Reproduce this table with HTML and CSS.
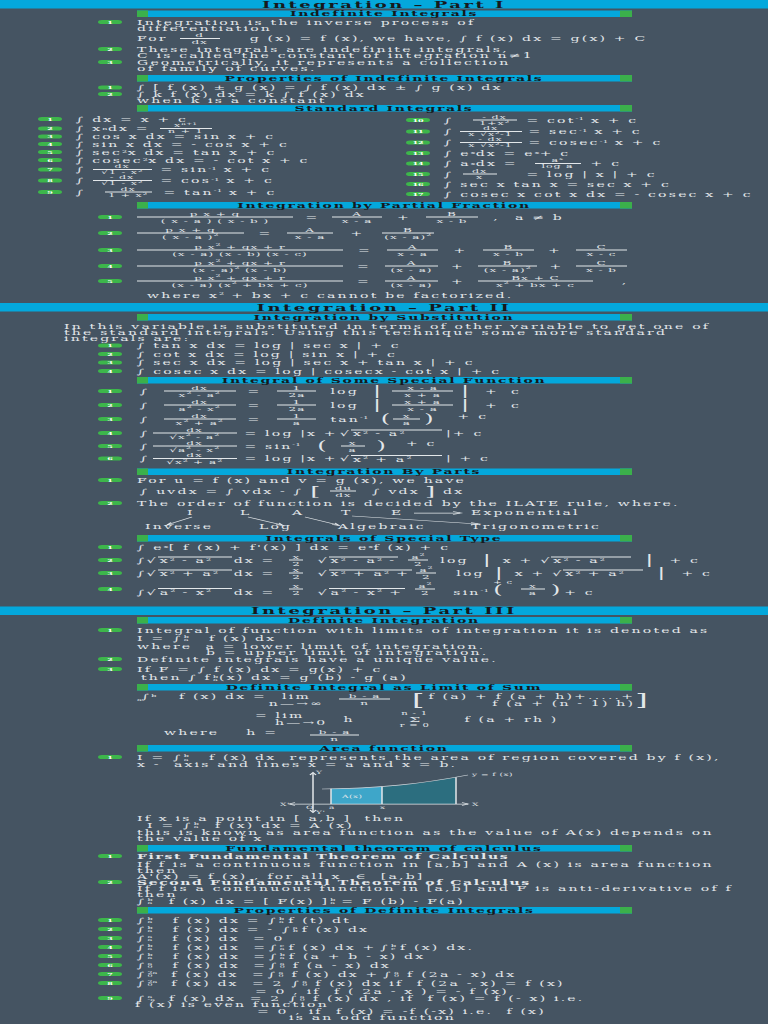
FILE: index.html
```html
<!DOCTYPE html>
<html lang="en">
<head>
<meta charset="utf-8">
<title>Integration – Formula Sheet</title>
<link rel="stylesheet" href="styles.css">
</head>
<body>
<div class="frame">
<div class="sheet">

<!-- ================= PART I ================= -->
<div class="main">Integration – Part I</div>
<div class="sub mt4">Indefinite Integrals</div>
<div class="it mt4"><span class="b">1</span><div>Integration is the inverse process of<br>differentiation</div></div>
<div class="cont h26 mt2">For<span class="fr w40 ml12"><span>d</span><span>dx</span></span><span class="ml30">g (x) = f (x), we have, ∫ f (x) dx = g(x) + C</span></div>
<div class="it mt2"><span class="b">2</span><div>These integrals are indefinite integrals,<br>C is called the constant of integration n≠1</div></div>
<div class="it mt2"><span class="b">3</span><div>Geometrically, it represents a collection<br>of family of curves.</div></div>

<div class="sub mt8">Properties of Indefinite Integrals</div>
<div class="it mt6"><span class="b">1</span><div>∫ [ f (x) ± g (x) = ∫ f (x) dx ± ∫ g (x) dx</div></div>
<div class="it mt1"><span class="b">2</span><div>∫ k f (x) dx = k ∫ f (x) dx<br>when k is a constant</div></div>

<div class="sub mt4">Standard Integrals</div>
<div class="std mt5">
  <div class="col">
    <div class="sr h20"><span class="b">1</span>∫ dx = x + c</div>
    <div class="sr h17"><span class="b">2</span>∫ x<sup>n</sup> dx =<span class="fr fs w52 ml10"><span>x<sup>n+1</sup></span><span>n + 1</span></span></div>
    <div class="sr h15"><span class="b">3</span>∫ cos x dx = sin x + c</div>
    <div class="sr h16"><span class="b">4</span>∫ sin x dx = - cos x + c</div>
    <div class="sr h16"><span class="b">5</span>∫ sec<sup>2</sup>x dx = tan x + c</div>
    <div class="sr h16"><span class="b">6</span>∫ cosec<sup>2</sup>x dx = - cot x + c</div>
    <div class="sr h21"><span class="b">7</span>∫<span class="fr fs w59 ml7"><span>dx</span><span>√1 - x<sup>2</sup></span></span><span class="ml9">= sin<sup>-1</sup> x + c</span></div>
    <div class="sr h24"><span class="b">8</span>∫<span class="fr fs w59 ml7"><span>- dx</span><span>√1 - x<sup>2</sup></span></span><span class="ml9">= cos<sup>-1</sup> x + c</span></div>
    <div class="sr h22"><span class="b">9</span>∫<span class="fr fs w47 ml19"><span>dx</span><span>1 + x<sup>2</sup></span></span><span class="ml12">= tan<sup>-1</sup> x + c</span></div>
  </div>
  <div class="col">
    <div class="sr h24"><span class="b">10</span>∫<span class="fr fs w44 ml19"><span>- dx</span><span>1+x<sup>2</sup></span></span><span class="ml10">= cot<sup>-1</sup> x + c</span></div>
    <div class="sr h22"><span class="b">11</span>∫<span class="fr fs w62 ml6"><span>dx</span><span>x √x<sup>2</sup>-1</span></span><span class="ml7">= sec<sup>-1</sup> x + c</span></div>
    <div class="sr h21"><span class="b">12</span>∫<span class="fr fs w62 ml6"><span>- dx</span><span>x √x<sup>2</sup>-1</span></span><span class="ml7">= cosec<sup>-1</sup> x + c</span></div>
    <div class="sr h21"><span class="b">13</span>∫ e<sup>x</sup> dx = e<sup>x</sup> + c</div>
    <div class="sr h21"><span class="b">14</span>∫ a<sup>x</sup> dx =<span class="fr fs w46 ml17"><span>a<sup>x</sup></span><span>log a</span></span><span class="ml10">+ c</span></div>
    <div class="sr h21"><span class="b">15</span>∫<span class="fr fs w34 ml9"><span>dx</span><span>x</span></span><span class="ml30">= log | x | + c</span></div>
    <div class="sr h20"><span class="b">16</span>∫ sec x tan x = sec x + c</div>
    <div class="sr h20"><span class="b">17</span>∫ cosec x cot x dx = - cosec x + c</div>
  </div>
</div>

<div class="sub mt6">Integration by Partial Fraction</div>
<div class="it mid h28 mt3"><span class="b">1</span>
  <div class="pf pf1">
    <span class="fr"><span>p x + q</span><span>( x - a ) ( x - b )</span></span>
    <span>=</span>
    <span class="fr"><span>A</span><span>x - a</span></span>
    <span>+</span>
    <span class="fr"><span>B</span><span>x - b</span></span>
    <span>,</span>
    <span class="js">a ≠ b</span>
  </div>
</div>
<div class="it mid h28 mt4"><span class="b">2</span>
  <div class="pf pf2">
    <span class="fr"><span>p x + q</span><span>( x - a )<sup>2</sup></span></span>
    <span>=</span>
    <span class="fr"><span>A</span><span>x - a</span></span>
    <span>+</span>
    <span class="fr"><span>B</span><span>(x - a)<sup>2</sup></span></span>
  </div>
</div>
<div class="it mid h28 mt6"><span class="b">3</span>
  <div class="pf pf3">
    <span class="fr"><span>p x<sup>2</sup> + qx + r</span><span>(x - a) (x - b) (x - c)</span></span>
    <span>=</span>
    <span class="fr"><span>A</span><span>x - a</span></span>
    <span>+</span>
    <span class="fr"><span>B</span><span>x - b</span></span>
    <span>+</span>
    <span class="fr"><span>C</span><span>x - c</span></span>
  </div>
</div>
<div class="it mid h28 mt4"><span class="b">4</span>
  <div class="pf pf4">
    <span class="fr"><span>p x<sup>2</sup> + qx + r</span><span>(x - a)<sup>2</sup> (x - b)</span></span>
    <span>=</span>
    <span class="fr"><span>A</span><span>(x - a)</span></span>
    <span>+</span>
    <span class="fr"><span>B</span><span>(x - a)<sup>2</sup></span></span>
    <span>+</span>
    <span class="fr"><span>C</span><span>x - b</span></span>
  </div>
</div>
<div class="it mid h28 mt2"><span class="b">5</span>
  <div class="pf pf5">
    <span class="fr"><span>p x<sup>2</sup> + qx + r</span><span>(x - a) (x<sup>2</sup> + bx + c)</span></span>
    <span>=</span>
    <span class="fr"><span>A</span><span>(x - a)</span></span>
    <span>+</span>
    <span class="fr"><span>Bx + C</span><span>x<sup>2</sup> + bx + c</span></span>
    <span>,</span>
  </div>
</div>
<div class="cont h12 mt8"><span class="ml10">where x<sup>2</sup> + bx + c cannot be factorized.</span></div>

<!-- ================= PART II ================= -->
<div class="main mt10">Integration – Part II</div>
<div class="sub mt5">Integration by Substitution</div>
<div class="para mt5">In this variable is substituted in terms of other variable to get one of<br>the standard integrals. Using this technique some more standard<br>integrals are:</div>
<div class="it mid h17"><span class="b">1</span>∫ tan x dx = log | sec x | + c</div>
<div class="it mid h17"><span class="b">2</span>∫ cot x dx = log | sin x | + c</div>
<div class="it mid h17"><span class="b">3</span>∫ sec x dx = log | sec x + tan x | + c</div>
<div class="it mid h17"><span class="b">4</span>∫ cosec x dx = log | cosecx - cot x | + c</div>

<div class="sub mt4">Integral of Some Special Function</div>
<div class="it mid h28 mt1"><span class="b">1</span>
  <span class="ml3">∫</span>
  <span class="fr w72 ml14"><span>dx</span><span>x<sup>2</sup> - a<sup>2</sup></span></span>
  <span class="ml12">=</span>
  <span class="fr w39 ml16"><span>1</span><span>2a</span></span>
  <span class="ml14">log</span>
  <span class="big ml14">|</span>
  <span class="fr w61 ml11"><span>x - a</span><span>x + a</span></span>
  <span class="big ml8">|</span>
  <span class="ml16">+</span>
  <span class="ml12">c</span>
</div>
<div class="it mid h28"><span class="b">2</span>
  <span class="ml3">∫</span>
  <span class="fr w72 ml14"><span>dx</span><span>a<sup>2</sup> - x<sup>2</sup></span></span>
  <span class="ml12">=</span>
  <span class="fr w39 ml16"><span>1</span><span>2a</span></span>
  <span class="ml14">log</span>
  <span class="big ml14">|</span>
  <span class="fr w61 ml11"><span>x + a</span><span>x - a</span></span>
  <span class="big ml8">|</span>
  <span class="ml16">+</span>
  <span class="ml12">c</span>
</div>
<div class="it mid h28"><span class="b">3</span>
  <span class="ml3">∫</span>
  <span class="fr w72 ml14"><span>dx</span><span>x<sup>2</sup> + a<sup>2</sup></span></span>
  <span class="ml12">=</span>
  <span class="fr w39 ml16"><span>1</span><span>a</span></span>
  <span class="ml14">tan<sup>-1</sup></span>
  <span class="bigp ml12">(</span>
  <span class="fr w27 ml3"><span>x</span><span>a</span></span>
  <span class="bigp ml4">)</span>
  <span class="raise ml24">+ c</span>
</div>
<div class="it mid h27"><span class="b">4</span>
  <span class="ml3">∫</span>
  <span class="fr w84 ml3"><span>dx</span><span>√x<sup>2</sup> - a<sup>2</sup></span></span>
  <span class="ml8">= log |x +</span>
  <span class="ml2">√</span><span class="ov w91">x<sup>2</sup> - a<sup>2</sup></span>
  <span class="ml4">|+ c</span>
</div>
<div class="it mid h25"><span class="b">5</span>
  <span class="ml3">∫</span>
  <span class="fr w84 ml3"><span>dx</span><span>√a<sup>2</sup> - x<sup>2</sup></span></span>
  <span class="ml8">= sin<sup>-1</sup></span>
  <span class="bigp ml16">(</span>
  <span class="fr w24 ml14"><span>x</span><span>a</span></span>
  <span class="bigp ml12">)</span>
  <span class="raise ml20">+ c</span>
</div>
<div class="it mid h25"><span class="b">6</span>
  <span class="ml3">∫</span>
  <span class="fr w84 ml3"><span>dx</span><span>√x<sup>2</sup> + a<sup>2</sup></span></span>
  <span class="ml8">= log |x +</span>
  <span class="ml2">√</span><span class="ov w91">x<sup>2</sup> + a<sup>2</sup></span>
  <span class="ml4">| + c</span>
</div>

<div class="sub mt8">Integration By Parts</div>
<div class="it mt4 h12"><span class="b">1</span><div>For u = f (x) and v = g (x), we have</div></div>
<div class="cont h24 mt4">
  <span class="ml3">∫ uvdx = ∫ vdx - ∫</span>
  <span class="bigb ml7">[</span>
  <span class="fr w26 ml10"><span>du</span><span>dx</span></span>
  <span class="ml16">∫ vdx</span>
  <span class="bigb ml5">]</span>
  <span class="ml8">dx</span>
</div>
<div class="it mt6 h12"><span class="b">2</span><div>The order of function is decided by the ILATE rule, where.</div></div>
<svg class="ilate mt2" width="768" height="50" viewBox="0 0 768 50">
  <g class="svt">
    <text x="187" y="17">I</text>
    <text x="240" y="17">L</text>
    <text x="292" y="17">A</text>
    <text x="341" y="17">T</text>
    <text x="391" y="17">E</text>
    <text x="471" y="17">Exponential</text>
    <text x="145" y="45">Inverse</text>
    <text x="259" y="45">Log</text>
    <text x="338" y="45">Algebraic</text>
    <text x="471" y="45">Trigonometric</text>
  </g>
  <g class="svl">
    <path d="M414 12 H460"/>
    <path d="M453 9 L461 12 L453 15"/>
    <path d="M192 20 L168 35"/>
    <path d="M171 31 L167 36 L174 34"/>
    <path d="M248 20 L282 36"/>
    <path d="M276 35 L283 37 L279 32"/>
    <path d="M305 20 L338 36"/>
    <path d="M332 35 L339 37 L335 32"/>
    <path d="M352 18 L478 34"/>
    <path d="M471 31 L479 34 L471 36"/>
  </g>
</svg>

<div class="sub mt6">Integrals of Special Type</div>
<div class="it mid h12 mt5"><span class="b">1</span>∫ e<sup>x</sup> [ f (x) + f'(x) ] dx = e<sup>x</sup> f (x) + c</div>
<div class="it mid h24 mt8"><span class="b">2</span>
  <span>∫√</span><span class="ov w74">x<sup>2</sup> - a<sup>2</sup></span><span class="ml2">dx =</span>
  <span class="fr w14 ml14"><span>x</span><span>2</span></span>
  <span class="ml14">√</span><span class="ov">x<sup>2</sup> - a<sup>2</sup> -</span>
  <span class="fr w20 ml10"><span>a<sup>2</sup></span><span>2</span></span>
  <span class="ml12">log</span>
  <span class="big ml14">|</span>
  <span class="ml12">x + √</span><span class="ov w80">x<sup>2</sup> - a<sup>2</sup></span>
  <span class="big ml14">|</span>
  <span class="ml16">+ c</span>
</div>
<div class="it mid h24 mt2"><span class="b">3</span>
  <span>∫√</span><span class="ov w74">x<sup>2</sup> + a<sup>2</sup></span><span class="ml2">dx =</span>
  <span class="fr w14 ml14"><span>x</span><span>2</span></span>
  <span class="ml14">√</span><span class="ov">x<sup>2</sup> + a<sup>2</sup> +</span>
  <span class="fr w20 ml4"><span>a<sup>2</sup></span><span>2</span></span>
  <span class="ml20">log</span>
  <span class="big ml10">|</span>
  <span class="ml12">x + √</span><span class="ov w80">x<sup>2</sup> + a<sup>2</sup></span>
  <span class="big ml14">|</span>
  <span class="ml16">+ c</span>
</div>
<div class="it bot h36 mt2"><span class="b">4</span>
  <span>∫√</span><span class="ov w74">a<sup>2</sup> - x<sup>2</sup></span><span class="ml2">dx =</span>
  <span class="fr w14 ml14"><span>x</span><span>2</span></span>
  <span class="ml14">√</span><span class="ov">a<sup>2</sup> - x<sup>2</sup> +</span>
  <span class="fr w20 ml10"><span>a<sup>2</sup></span><span>2</span></span>
  <span class="ml18">sin<sup>-1</sup></span>
  <span class="stkp"><span class="sm">+ c</span><span class="bigp">(</span></span>
  <span class="fr w24 ml8"><span>x</span><span>a</span></span>
  <span class="bigp ml6">)</span>
  <span class="ml4">+ c</span>
</div>

<!-- ================= PART III ================= -->
<div class="main mt17">Integration – Part III</div>
<div class="sub mt4">Definite Integration</div>
<div class="it mt7 h12"><span class="b">1</span><div>Integral of function with limits of integration it is denoted as</div></div>
<div class="cont h16 mt2">I =<span class="int ml8">∫<span class="lm"><span>b</span><span>a</span></span></span><span class="ml20">f (x) dx</span></div>
<div class="cont mt2"><div>where&nbsp; a = lower limit of integration.<br><span class="ind">b = upper limit of integration.</span></div></div>
<div class="it mt2 h12"><span class="b">2</span><div>Definite integrals have a unique value.</div></div>
<div class="it mt8 h12"><span class="b">3</span><div>If F = ∫ f (x) dx = g(x) + c</div></div>
<div class="cont h16 mt4"><span class="ml4">then ∫ f<span class="lm lmi"><span>b</span><span>a</span></span>(x) dx = g (b) - g (a)</span></div>

<div class="sub mt4">Definite Integral as Limit of Sum</div>
<div class="ls1 mt5">
  <span class="t14"><span class="lo">a</span>∫<sup>b</sup></span>
  <span class="t14 ml22">f (x) dx =</span>
  <span class="stk ml2"><span>lim</span><span>n—→∞</span></span>
  <span class="fr w51 ml15"><span>b - a</span><span>n</span></span>
  <span class="bigger ml22">[</span>
  <span class="two ml4"><span>f (a) + f (a + h)+.....+</span><span>f (a + (n - 1) h)</span></span>
  <span class="bigger">]</span>
</div>
<div class="ls2 mt4">
  <span class="stk2"><span>= lim</span><span class="pl20">h—→0</span></span>
  <span class="ml16">h</span>
  <span class="stk3 ml45"><span class="sm">n - 1</span><span class="sig">Σ</span><span class="sm">r = 0</span></span>
  <span class="ml35">f (a + rh )</span>
</div>
<div class="ls3 mt2">
  <span class="t14">where</span>
  <span class="t14 ml27">h =</span>
  <span class="fr w49 ml32"><span>b - a</span><span>n</span></span>
</div>

<div class="sub mt6">Area function</div>
<div class="it mt5"><span class="b">1</span><div>I =<span class="int ml8">∫<span class="lm"><span>b</span><span>a</span></span></span>&nbsp;&nbsp; f (x) dx&nbsp; represents the area of region covered by f (x),<br>x -&nbsp; axis and lines x = a and x = b.</div></div>
<div class="graph mt6">
  <svg width="260" height="88" viewBox="0 0 260 88">
    <defs>
      <clipPath id="under"><path d="M42 38 C 100 37, 140 28, 188 10 L188 68 L42 68 Z"/></clipPath>
    </defs>
    <g clip-path="url(#under)">
      <rect x="51" y="0" width="51" height="68" fill="#3ea6c9"/>
      <rect x="102" y="0" width="74" height="68" fill="#2c6e7f"/>
    </g>
    <path d="M42 38 C 100 37, 140 28, 188 10" fill="none" stroke="#d3d9de" stroke-width="1.5"/>
    <g class="svl">
      <line x1="51" y1="37.6" x2="51" y2="68"/>
      <line x1="102" y1="33.5" x2="102" y2="68"/>
      <line x1="176" y1="14.5" x2="176" y2="68"/>
      <line x1="10" y1="68" x2="188" y2="68"/>
      <path d="M15 65 L9 68 L15 71"/>
      <path d="M182 65 L188 68 L182 71"/>
      <line x1="33" y1="6" x2="33" y2="84"/>
      <path d="M30 10 L33 5 L36 10"/>
      <path d="M30 80 L33 85 L36 80"/>
    </g>
    <g class="gt">
      <text x="0" y="72">X'</text>
      <text x="192" y="72">X</text>
      <text x="36" y="9">Y</text>
      <text x="36" y="88">Y'</text>
      <text x="26" y="78">O</text>
      <text x="49" y="78">a</text>
      <text x="100" y="78">x</text>
      <text x="62" y="56">A(x)</text>
      <text x="192" y="12">y = f (x)</text>
    </g>
  </svg>
</div>
<div class="cont h12 mt2">If x is a point in [ a,b ]&nbsp; then</div>
<div class="cont h16"><span class="ml10">I =</span><span class="int ml8">∫<span class="lm"><span>b</span><span>a</span></span></span><span class="ml16">f (x) dx = A (x)</span></div>
<div class="cont"><div>this is known as area function as the value of A(x) depends on<br>the value of x</div></div>

<div class="sub mt8">Fundamental theorem of calculus</div>
<div class="it mt3 h12"><span class="b">1</span><div class="bold">First Fundamental Theorem of Calculus</div></div>
<div class="cont mt4"><div>If f is a continuous function in [a,b] and A (x) is area function<br>then</div></div>
<div class="cont h12">A'(x) = f (x) , for all x&nbsp; ∈&nbsp; [a,b]</div>
<div class="it h12"><span class="b">2</span><div class="bold">Second Fundamental Theorem of Calculus</div></div>
<div class="cont"><div>If f is a continuous function in [a,b] and F is anti-derivative of f<br>then</div></div>
<div class="cont h16"><span class="int">∫<span class="lm"><span>b</span><span>a</span></span></span><span class="ml16">f (x) dx = [ F(x) ]</span><span class="lm"><span>b</span><span>a</span></span><span class="ml6">= F (b) - F(a)</span></div>

<div class="sub mt4">Properties of Definite Integrals</div>
<div class="it mid h18 mt4"><span class="b">1</span><span class="int">∫<span class="lm"><span>b</span><span>a</span></span></span><span class="ml20">f (x) dx =</span><span class="int ml8">∫<span class="lm"><span>b</span><span>a</span></span></span><span class="ml4">f (t) dt</span></div>
<div class="it mid h18"><span class="b">2</span><span class="int">∫<span class="lm"><span>b</span><span>a</span></span></span><span class="ml20">f (x) dx = -</span><span class="int ml8">∫<span class="lm"><span>a</span><span>b</span></span></span><span class="ml4">f (x) dx</span></div>
<div class="it mid h18"><span class="b">3</span><span class="int">∫<span class="lm"><span>a</span><span>a</span></span></span><span class="ml20">f (x) dx&nbsp; = 0</span></div>
<div class="it mid h18"><span class="b">4</span><span class="int">∫<span class="lm"><span>b</span><span>a</span></span></span><span class="ml20">f (x) dx&nbsp; =</span><span class="int ml2">∫<span class="lm"><span>c</span><span>a</span></span></span><span class="ml4">f (x) dx +</span><span class="int ml4">∫<span class="lm"><span>b</span><span>c</span></span></span><span class="ml4">f (x) dx.</span></div>
<div class="it mid h18"><span class="b">5</span><span class="int">∫<span class="lm"><span>b</span><span>a</span></span></span><span class="ml20">f (x) dx&nbsp; =</span><span class="int ml2">∫<span class="lm"><span>b</span><span>a</span></span></span><span class="ml4">f (a + b - x) dx</span></div>
<div class="it mid h18"><span class="b">6</span><span class="int">∫<span class="lm"><span>a</span><span>0</span></span></span><span class="ml20">f (x) dx&nbsp; =</span><span class="int ml2">∫<span class="lm"><span>a</span><span>0</span></span></span><span class="ml8">f (a - x) dx</span></div>
<div class="it mid h18"><span class="b">7</span><span class="int">∫<span class="lm"><span>2a</span><span>0</span></span></span><span class="ml14">f (x) dx&nbsp; =</span><span class="int ml2">∫<span class="lm"><span>a</span><span>0</span></span></span><span class="ml8">f (x) dx +</span><span class="int ml4">∫<span class="lm"><span>a</span><span>0</span></span></span><span class="ml8">f (2a - x) dx</span></div>
<div class="it mid h18"><span class="b">8</span><span class="int">∫<span class="lm"><span>2a</span><span>0</span></span></span><span class="ml14">f (x) dx&nbsp; = 2</span><span class="int ml8">∫<span class="lm"><span>a</span><span>0</span></span></span><span class="ml8">f (x) dx if&nbsp; f (2a - x) = f (x)</span></div>
<div class="cont h14 pl255">= 0 , if&nbsp; f ( 2a - x ) = - f (x)</div>
<div class="it mid h14"><span class="b">9</span><span class="int">∫<span class="lm"><span>a</span><span>-a</span></span></span><span class="ml14">f (x) dx&nbsp; = 2</span><span class="int ml8">∫<span class="lm"><span>a</span><span>0</span></span></span><span class="ml8">f (x) dx , if&nbsp; f (x) = f (- x) i.e.</span></div>
<div class="cont h12 pl135">f (x) is even function</div>
<div class="cont h14 pl257">= 0 , if&nbsp; f (x) = -f (-x) i.e.&nbsp; f (x)</div>
<div class="cont h12 pl289">is an odd function</div>

</div>
</div>
</body>
</html>
```

FILE: styles.css
```css
* { box-sizing: border-box; }

html {
  height: 1024px;
  overflow: hidden;
  background: #455462;
}

body {
  margin: 0;
  padding: 0;
  height: 1024px;
  overflow: hidden;
  background: #455462;
}

/* fixed poster frame: the sheet inside is laid out at double height
   and squeezed vertically, giving the wide, flat lettering of the original */
.frame {
  width: 768px;
  height: 1024px;
  overflow: hidden;
}

.sheet {
  width: 768px;
  height: 2048px;
  transform: scaleY(0.5);
  transform-origin: 0 0;
  font-family: "DejaVu Serif", "Liberation Serif", serif;
  font-size: 14px;
  letter-spacing: 2.2px;
  line-height: 12px;
  color: #e3e7ea;
  white-space: nowrap;
}

/* ---------- bars ---------- */
.main {
  height: 17px;
  background: #04a8dc;
  color: #16191d;
  font-weight: bold;
  font-size: 18px;
  letter-spacing: 2.5px;
  line-height: 17px;
  text-align: center;
}

.sub {
  margin-left: 137px;
  width: 495px;
  height: 13px;
  background: #04a8dc;
  border-left: 11px solid #3bb04b;
  border-right: 12px solid #3bb04b;
  color: #16191d;
  font-weight: bold;
  font-size: 14px;
  letter-spacing: 1.7px;
  line-height: 13px;
  text-align: center;
}

/* ---------- numbered badge ---------- */
.b {
  flex: none;
  width: 24px;
  height: 8px;
  border-radius: 4px;
  background: #3db64b;
  color: #ffffff;
  font-size: 8px;
  font-weight: bold;
  line-height: 8px;
  letter-spacing: 0;
  text-align: center;
}

/* ---------- rows ---------- */
.it {
  display: flex;
  align-items: flex-start;
  padding-left: 98px;
}
.it > .b { margin-right: 15px; margin-top: 2px; }
.it.mid { align-items: center; }
.it.mid > .b { margin-top: 0; }
.it.bot { align-items: flex-end; padding-bottom: 6px; }
.it.bot > .b { margin-bottom: 8px; }

.cont {
  display: flex;
  align-items: center;
  padding-left: 137px;
}

.para { padding-left: 64px; }

.bold { font-weight: bold; letter-spacing: 1.6px; }

.ind { padding-left: 69px; }

.pl135 { padding-left: 135px; }
.pl255 { padding-left: 255px; }
.pl257 { padding-left: 257px; }
.pl289 { padding-left: 289px; }
.pl20 { padding-left: 20px; }

/* ---------- standard integrals (two columns) ---------- */
.std {
  display: grid;
  grid-template-columns: 368px 1fr;
  padding-left: 38px;
}
.col { display: flex; flex-direction: column; }
.sr { display: flex; align-items: center; }
.sr > .b { margin-right: 14px; }

/* ---------- maths pieces ---------- */
sup {
  font-size: 8px;
  line-height: 0;
  vertical-align: 5px;
  letter-spacing: 0.5px;
}

.fr {
  display: inline-flex;
  flex-direction: column;
  align-items: stretch;
  justify-content: center;
  flex: none;
  font-size: 12px;
  line-height: 10px;
  letter-spacing: 1px;
  text-align: center;
}
.fr > span:first-child {
  border-bottom: 2px solid #e3e7ea;
  padding: 0 2px 1px;
}
.fr > span:last-child { padding-top: 1px; }
.fr.fs { font-size: 11px; line-height: 8px; }
.fr.fs sup { font-size: 7px; vertical-align: 4px; }

.ov {
  display: inline-block;
  border-top: 2px solid #e3e7ea;
  padding: 1px 2px 0;
  line-height: 11px;
  text-align: left;
}

.big { font-size: 24px; line-height: 20px; letter-spacing: 0; }
.bigp { font-size: 24px; line-height: 20px; letter-spacing: 0; }
.bigb { font-size: 26px; line-height: 22px; letter-spacing: 0; }
.bigger { font-size: 32px; line-height: 30px; letter-spacing: 0; }

.raise { align-self: flex-start; margin-top: 2px; }

.int {
  display: inline-flex;
  align-items: center;
  flex: none;
}
.lm {
  display: inline-flex;
  flex-direction: column;
  font-size: 8px;
  line-height: 7px;
  letter-spacing: 0;
  margin-left: 1px;
  vertical-align: middle;
}
.lmi { margin-right: 1px; }

.lo { font-size: 8px; vertical-align: -3px; letter-spacing: 0; }
.sm { font-size: 10px; line-height: 10px; letter-spacing: 0.8px; }

.stkp {
  display: inline-flex;
  flex-direction: column;
  align-items: flex-start;
  margin-left: 4px;
}

/* partial fraction grids */
.pf {
  display: grid;
  align-items: center;
  justify-items: center;
}
.pf > .fr { justify-self: stretch; }
.pf > .js { justify-self: start; }
.pf1 { grid-template-columns: 156px 39px 50px 44px 52px 37px auto; }
.pf2 { grid-template-columns: 107px 43px 46px 49px 52px; }
.pf3 { grid-template-columns: 206px 44px 51px 45px 51px 42px 51px; }
.pf4 { grid-template-columns: 206px 42px 53px 40px 59px 39px 51px; }
.pf5 { grid-template-columns: 206px 42px 53px 40px 115px 64px; }

/* limit of sum */
.ls1 {
  display: flex;
  align-items: flex-start;
  height: 30px;
  padding-left: 137px;
}
.ls2 {
  display: flex;
  align-items: center;
  height: 36px;
  padding-left: 255px;
}
.ls3 {
  display: flex;
  align-items: flex-start;
  height: 26px;
  padding-left: 164px;
}
.t14 { line-height: 14px; }
.stk {
  display: inline-flex;
  flex-direction: column;
  align-items: center;
  line-height: 14px;
}
.stk2 {
  display: inline-flex;
  flex-direction: column;
  align-items: flex-start;
  line-height: 14px;
}
.stk3 {
  display: inline-flex;
  flex-direction: column;
  align-items: center;
}
.sig { font-size: 16px; line-height: 14px; letter-spacing: 0; }
.two {
  display: flex;
  flex-direction: column;
  align-items: flex-end;
  line-height: 14px;
}

/* diagrams */
.ilate { display: block; }
.svt text {
  fill: #e3e7ea;
  font-size: 14px;
  letter-spacing: 2.2px;
}
.svl { stroke: #e3e7ea; stroke-width: 1.5; fill: none; }
.graph { padding-left: 280px; height: 88px; }
.graph svg { display: block; }
.gt text {
  fill: #e3e7ea;
  font-size: 9px;
  letter-spacing: 0.5px;
}

/* ---------- sizes ---------- */
.h12 { height: 12px; }
.h14 { height: 14px; }
.h15 { height: 15px; }
.h16 { height: 16px; }
.h17 { height: 17px; }
.h18 { height: 18px; }
.h20 { height: 20px; }
.h21 { height: 21px; }
.h22 { height: 22px; }
.h24 { height: 24px; }
.h25 { height: 25px; }
.h26 { height: 26px; }
.h27 { height: 27px; }
.h28 { height: 28px; }
.h36 { height: 36px; }

.w14 { width: 14px; }
.w20 { width: 20px; }
.w24 { width: 24px; }
.w26 { width: 26px; }
.w27 { width: 27px; }
.w34 { width: 34px; }
.w39 { width: 39px; }
.w40 { width: 40px; }
.w44 { width: 44px; }
.w46 { width: 46px; }
.w47 { width: 47px; }
.w49 { width: 49px; }
.w51 { width: 51px; }
.w52 { width: 52px; }
.w59 { width: 59px; }
.w61 { width: 61px; }
.w62 { width: 62px; }
.w72 { width: 72px; }
.w74 { width: 74px; }
.w80 { width: 80px; }
.w84 { width: 84px; }
.w91 { width: 91px; }

.mt1 { margin-top: 1px; }
.mt2 { margin-top: 2px; }
.mt3 { margin-top: 3px; }
.mt4 { margin-top: 4px; }
.mt5 { margin-top: 5px; }
.mt6 { margin-top: 6px; }
.mt7 { margin-top: 7px; }
.mt8 { margin-top: 8px; }
.mt10 { margin-top: 10px; }
.mt17 { margin-top: 17px; }

.ml2 { margin-left: 2px; }
.ml3 { margin-left: 3px; }
.ml4 { margin-left: 4px; }
.ml5 { margin-left: 5px; }
.ml6 { margin-left: 6px; }
.ml7 { margin-left: 7px; }
.ml8 { margin-left: 8px; }
.ml9 { margin-left: 9px; }
.ml10 { margin-left: 10px; }
.ml11 { margin-left: 11px; }
.ml12 { margin-left: 12px; }
.ml14 { margin-left: 14px; }
.ml15 { margin-left: 15px; }
.ml16 { margin-left: 16px; }
.ml17 { margin-left: 17px; }
.ml18 { margin-left: 18px; }
.ml19 { margin-left: 19px; }
.ml20 { margin-left: 20px; }
.ml22 { margin-left: 22px; }
.ml24 { margin-left: 24px; }
.ml27 { margin-left: 27px; }
.ml30 { margin-left: 30px; }
.ml32 { margin-left: 32px; }
.ml35 { margin-left: 35px; }
.ml45 { margin-left: 45px; }
```
